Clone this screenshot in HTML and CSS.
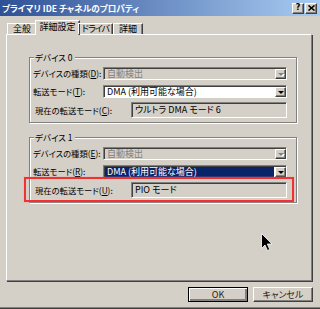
FILE: index.html
```html
<!DOCTYPE html>
<html lang="ja">
<head>
    <meta charset="UTF-8" />
    <title>プライマリ IDE チャネルのプロパティ</title>
    <link rel="stylesheet" href="styles.css">
</head>
<body>
    <div class="window">
        <div class="titlebar">
            <span class="title">プライマリ IDE チャネルのプロパティ</span>
            <div class="caption-buttons">
                <span class="cap-btn">?</span>
                <span class="cap-btn">
                    <svg width="7" height="6" viewBox="0 0 7 6"><path d="M0.5 0.5 L6.5 5.5 M6.5 0.5 L0.5 5.5" stroke="#000" stroke-width="1.6"/></svg>
                </span>
            </div>
        </div>

        <div class="tabs">
            <div class="tab tab-general">全般</div>
            <div class="tab tab-advanced active">詳細設定</div>
            <div class="tab tab-driver">ドライバ</div>
            <div class="tab tab-details">詳細</div>
        </div>

        <div class="panel">
            <div class="group">
                <div class="group-title">デバイス 0</div>
                <div class="row">
                    <label>デバイスの種類(<u>D</u>):</label>
                    <div class="combo disabled">
                        <span class="value">自動検出</span>
                        <span class="drop"><span class="arrow"></span></span>
                    </div>
                </div>
                <div class="row">
                    <label>転送モード(<u>T</u>):</label>
                    <div class="combo">
                        <span class="value">DMA (利用可能な場合)</span>
                        <span class="drop"><span class="arrow"></span></span>
                    </div>
                </div>
                <div class="row row-current">
                    <label>現在の転送モード(<u>C</u>):</label>
                    <div class="readonly">ウルトラ DMA モード 6</div>
                </div>
            </div>

            <div class="group">
                <div class="group-title">デバイス 1</div>
                <div class="row">
                    <label>デバイスの種類(<u>E</u>):</label>
                    <div class="combo disabled">
                        <span class="value">自動検出</span>
                        <span class="drop"><span class="arrow"></span></span>
                    </div>
                </div>
                <div class="row">
                    <label>転送モード(<u>R</u>):</label>
                    <div class="combo">
                        <span class="value selected">DMA (利用可能な場合)</span>
                        <span class="drop"><span class="arrow"></span></span>
                    </div>
                </div>
                <div class="row row-current">
                    <label>現在の転送モード(<u>U</u>):</label>
                    <div class="readonly">PIO モード</div>
                </div>
            </div>
        </div>

        <div class="buttons">
            <button class="btn default">OK</button>
            <button class="btn">キャンセル</button>
        </div>

        <div class="highlight"></div>

        <svg class="cursor" width="12" height="19" viewBox="0 0 12 19">
            <path d="M0.5 0.5 L0.5 15.5 L4 12 L6.5 17.5 L8.8 16.5 L6.3 11 L11 11 Z" fill="#000" stroke="#fff" stroke-width="0.8"/>
        </svg>
    </div>
</body>
</html>
```

FILE: styles.css
```css
* {
    box-sizing: border-box;
    margin: 0;
    padding: 0;
}

body {
    font-family: "Noto Sans CJK JP", "Liberation Sans", sans-serif;
    font-size: 9px;
    font-feature-settings: "palt";
    color: #000;
    background-color: #d4d0c8;
}

.window {
    position: relative;
    width: 320px;
    height: 309px;
    background-color: #d4d0c8;
    box-shadow: inset 0 -1px #404040, inset 0 -2px #808080;
    overflow: hidden;
}

/* title bar */

.titlebar {
    display: flex;
    align-items: center;
    height: 16px;
    padding-left: 2px;
    background: linear-gradient(to right, #2f5096, #a8ccf2);
}

.title {
    flex: 1;
    color: #fff;
    font-weight: bold;
    font-size: 8.6px;
    line-height: 11px;
    white-space: nowrap;
}

.caption-buttons {
    display: flex;
    gap: 1px;
    margin-right: 3px;
}

.cap-btn {
    display: flex;
    align-items: center;
    justify-content: center;
    width: 12px;
    height: 11px;
    background-color: #d4d0c8;
    border: 1px solid;
    border-color: #fff #404040 #404040 #fff;
    box-shadow: inset -1px -1px #808080;
    font-family: "DejaVu Sans", sans-serif;
    font-weight: bold;
    font-size: 8px;
    line-height: 8px;
}

/* tabs */

.tabs {
    position: relative;
    z-index: 1;
    display: flex;
    align-items: flex-end;
    height: 14px;
    margin: 4px 0 0 7px;
}

.tab {
    height: 11px;
    border: 1px solid;
    border-color: #fff #404040 transparent #fff;
    border-bottom: none;
    box-shadow: inset -1px 0 #808080;
    text-align: center;
    line-height: 10px;
    white-space: nowrap;
}

.tab-general { width: 30px; }
.tab-advanced { width: 41px; }
.tab-driver { width: 35px; letter-spacing: -1px; }
.tab-details { width: 30px; }

.tab.active {
    width: 45px;
    height: 15px;
    margin: 0 -2px -1px;
    padding-top: 1px;
    background-color: #d4d0c8;
}

/* property page */

.panel {
    display: flex;
    flex-direction: column;
    gap: 14px;
    height: 247px;
    margin: 0 8px 0 6px;
    padding: 22px 14px 0 22px;
    border: 1px solid;
    border-color: #fff #808080 #808080 #fff;
    box-shadow: 1px 1px 0 #404040;
}

.group {
    display: flex;
    flex-direction: column;
    width: 268px;
    padding: 0 9px 4px 3px;
    border: 1px solid #808080;
    box-shadow: 1px 1px 0 #fff, inset 1px 1px 0 #fff;
}

.group-title {
    align-self: flex-start;
    margin: -6px 0 0 1px;
    padding: 0 2px 0 1px;
    background-color: #d4d0c8;
    font-size: 8.5px;
    line-height: 11px;
}

.row {
    display: flex;
    align-items: center;
    justify-content: space-between;
    margin-top: 4px;
}

.row + .row {
    margin-top: 5px;
}

.row.row-current {
    margin-top: 4px;
    padding-left: 2px;
}

label {
    font-size: 8.3px;
    line-height: 11px;
    white-space: nowrap;
}

.combo {
    display: flex;
    width: 184px;
    height: 13px;
    padding: 1px 0 0 1px;
    border: 1px solid;
    border-color: #808080 #fff #fff #808080;
    box-shadow: inset 1px 1px #404040;
    background-color: #fff;
}

.combo.disabled {
    background-color: #d4d0c8;
    color: #808080;
}

.value {
    flex: 1;
    margin-right: 1px;
    padding-left: 2px;
    line-height: 10px;
    white-space: nowrap;
}

.value.selected {
    background-color: #0a246a;
    color: #fff;
}

.drop {
    display: flex;
    align-items: center;
    justify-content: center;
    width: 11px;
    height: 10px;
    background-color: #d4d0c8;
    border: 1px solid;
    border-color: #fff #404040 #404040 #fff;
    box-shadow: inset -1px -1px #808080;
}

.arrow {
    width: 0;
    height: 0;
    border-left: 3px solid transparent;
    border-right: 3px solid transparent;
    border-top: 3px solid #000;
}

.combo.disabled .arrow {
    border-top-color: #808080;
    filter: drop-shadow(1px 1px 0 #fff);
}

.readonly {
    width: 156px;
    height: 16px;
    padding: 1px 0 0 3px;
    border: 1px solid;
    border-color: #808080 #fff #fff #808080;
    box-shadow: inset 1px 1px #404040;
    line-height: 12px;
    white-space: nowrap;
}

/* dialog buttons */

.buttons {
    display: flex;
    justify-content: flex-end;
    gap: 5px;
    margin-top: 6px;
    padding-right: 7px;
}

.btn {
    width: 60px;
    height: 15px;
    font-family: inherit;
    font-size: 9px;
    font-feature-settings: "palt";
    line-height: 10px;
    color: #222;
    background-color: #d4d0c8;
    border: 1px solid;
    border-color: #fff #404040 #404040 #fff;
    box-shadow: inset -1px -1px #808080;
}

.btn.default {
    border-color: #000;
    box-shadow: inset 1px 1px #fff, inset -2px -2px #808080;
}

/* annotation and pointer */

.highlight {
    position: absolute;
    left: 24px;
    top: 177px;
    width: 270px;
    height: 25px;
    border: 2px solid #f23232;
    box-shadow: 0 0 1px #f88;
}

.cursor {
    position: absolute;
    left: 261px;
    top: 233px;
}
```
